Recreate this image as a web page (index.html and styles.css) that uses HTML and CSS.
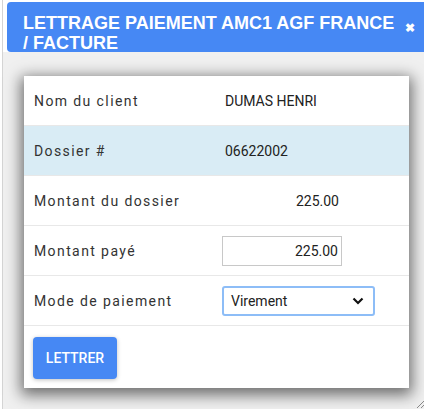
FILE: index.html
```html
<!DOCTYPE html>
<html lang="fr">
<head>
  <meta charset="UTF-8" />
  <meta name="viewport" content="width=device-width, initial-scale=1.0" />
  <title>Lettrage paiement</title>
  <link rel="stylesheet" href="styles.css">
</head>
<body>
  <div class="dialog">
    <div class="titlebar">
      <span class="title">LETTRAGE PAIEMENT AMC1 AGF FRANCE / FACTURE</span>
      <span class="close">&#10006;</span>
    </div>
    <div class="content">
      <div class="card">
        <table class="details">
          <tr>
            <td class="label">Nom du client</td>
            <td class="value">DUMAS HENRI</td>
          </tr>
          <tr class="info">
            <td class="label">Dossier #</td>
            <td class="value">06622002</td>
          </tr>
          <tr>
            <td class="label">Montant du dossier</td>
            <td class="value amount">225.00</td>
          </tr>
          <tr>
            <td class="label">Montant payé</td>
            <td class="value"><input type="text" class="field" value="225.00" /></td>
          </tr>
          <tr>
            <td class="label">Mode de paiement</td>
            <td class="value">
              <div class="select">
                <span>Virement</span>
                <svg width="12" height="8" viewBox="0 0 12 8"><path d="M1.5 1.5 L6 6 L10.5 1.5" fill="none" stroke="#111" stroke-width="2.2"/></svg>
              </div>
            </td>
          </tr>
        </table>
        <div class="actions">
          <button class="btn">LETTRER</button>
        </div>
      </div>
    </div>
    <svg class="grip" width="8" height="8" viewBox="0 0 8 8"><path d="M8 1 L1 8 M8 5 L5 8" stroke="#888" stroke-width="1"/></svg>
  </div>
</body>
</html>
```

FILE: styles.css
```css
body {
  margin: 0;
  background: #fff;
  font-family: Roboto, "Liberation Sans", sans-serif;
  color: #333;
}
.dialog {
  position: relative;
  margin-left: 2px;
  padding-top: 2px;
  border-left: 1px solid #d4d4d4;
  height: 407px;
  display: flex;
  flex-direction: column;
}
.titlebar {
  margin-left: 4px;
  background: #4688f4;
  border-radius: 4px 0 0 4px;
  height: 50px;
  box-sizing: border-box;
  padding: 11px 0 0 16px;
  display: flex;
  align-items: flex-start;
  color: #fff;
}
.title {
  width: 372px;
  font-family: "Liberation Sans", Arial, sans-serif;
  font-size: 18px;
  font-weight: bold;
  line-height: 20px;
}
.close {
  margin: 8px 0 0 10px;
  font-size: 12px;
  font-weight: bold;
}
.content {
  flex: 1;
  background: #f0f0f0;
  padding: 24px 0 0 21px;
}
.card {
  width: 385px;
  background: #fff;
  box-shadow: 0 4px 14px 3px rgba(0,0,0,0.55);
}
.details {
  width: 100%;
  border-collapse: collapse;
  font-size: 14px;
}
.details td {
  height: 49px;
  padding: 0;
  border-bottom: 1px solid #e8e8e8;
}
.details tr.info td {
  background: #d9ecf5;
}
.label {
  width: 188px;
  padding-left: 10px !important;
  letter-spacing: 1.4px;
  color: #333;
}
.value {
  color: #222;
  padding-left: 3px !important;
}
.amount {
  text-align: right;
  padding-right: 70px !important;
}
.field {
  width: 120px;
  height: 30px;
  box-sizing: border-box;
  border: 1px solid #c8c8c8;
  text-align: right;
  font-family: Roboto, "Liberation Sans", sans-serif;
  font-size: 14px;
  color: #222;
  padding: 0 3px 0 0;
  margin-left: -3px;
}
.select {
  width: 153px;
  height: 30px;
  box-sizing: border-box;
  margin-left: -3px;
  border: 2px solid #8dbdf7;
  border-radius: 3px;
  display: flex;
  align-items: center;
  justify-content: space-between;
  padding: 0 9px 0 7px;
  color: #222;
}
.actions {
  padding: 11px 9px 9px;
}
.btn {
  width: 84px;
  height: 42px;
  border: none;
  border-radius: 4px;
  background: #4688f4;
  color: #fff;
  font-family: Roboto, "Liberation Sans", sans-serif;
  font-size: 14px;
  font-weight: 500;
  box-shadow: 0 1px 4px rgba(0,0,0,0.25);
}
.grip {
  position: absolute;
  right: 0;
  bottom: 1px;
}
```
